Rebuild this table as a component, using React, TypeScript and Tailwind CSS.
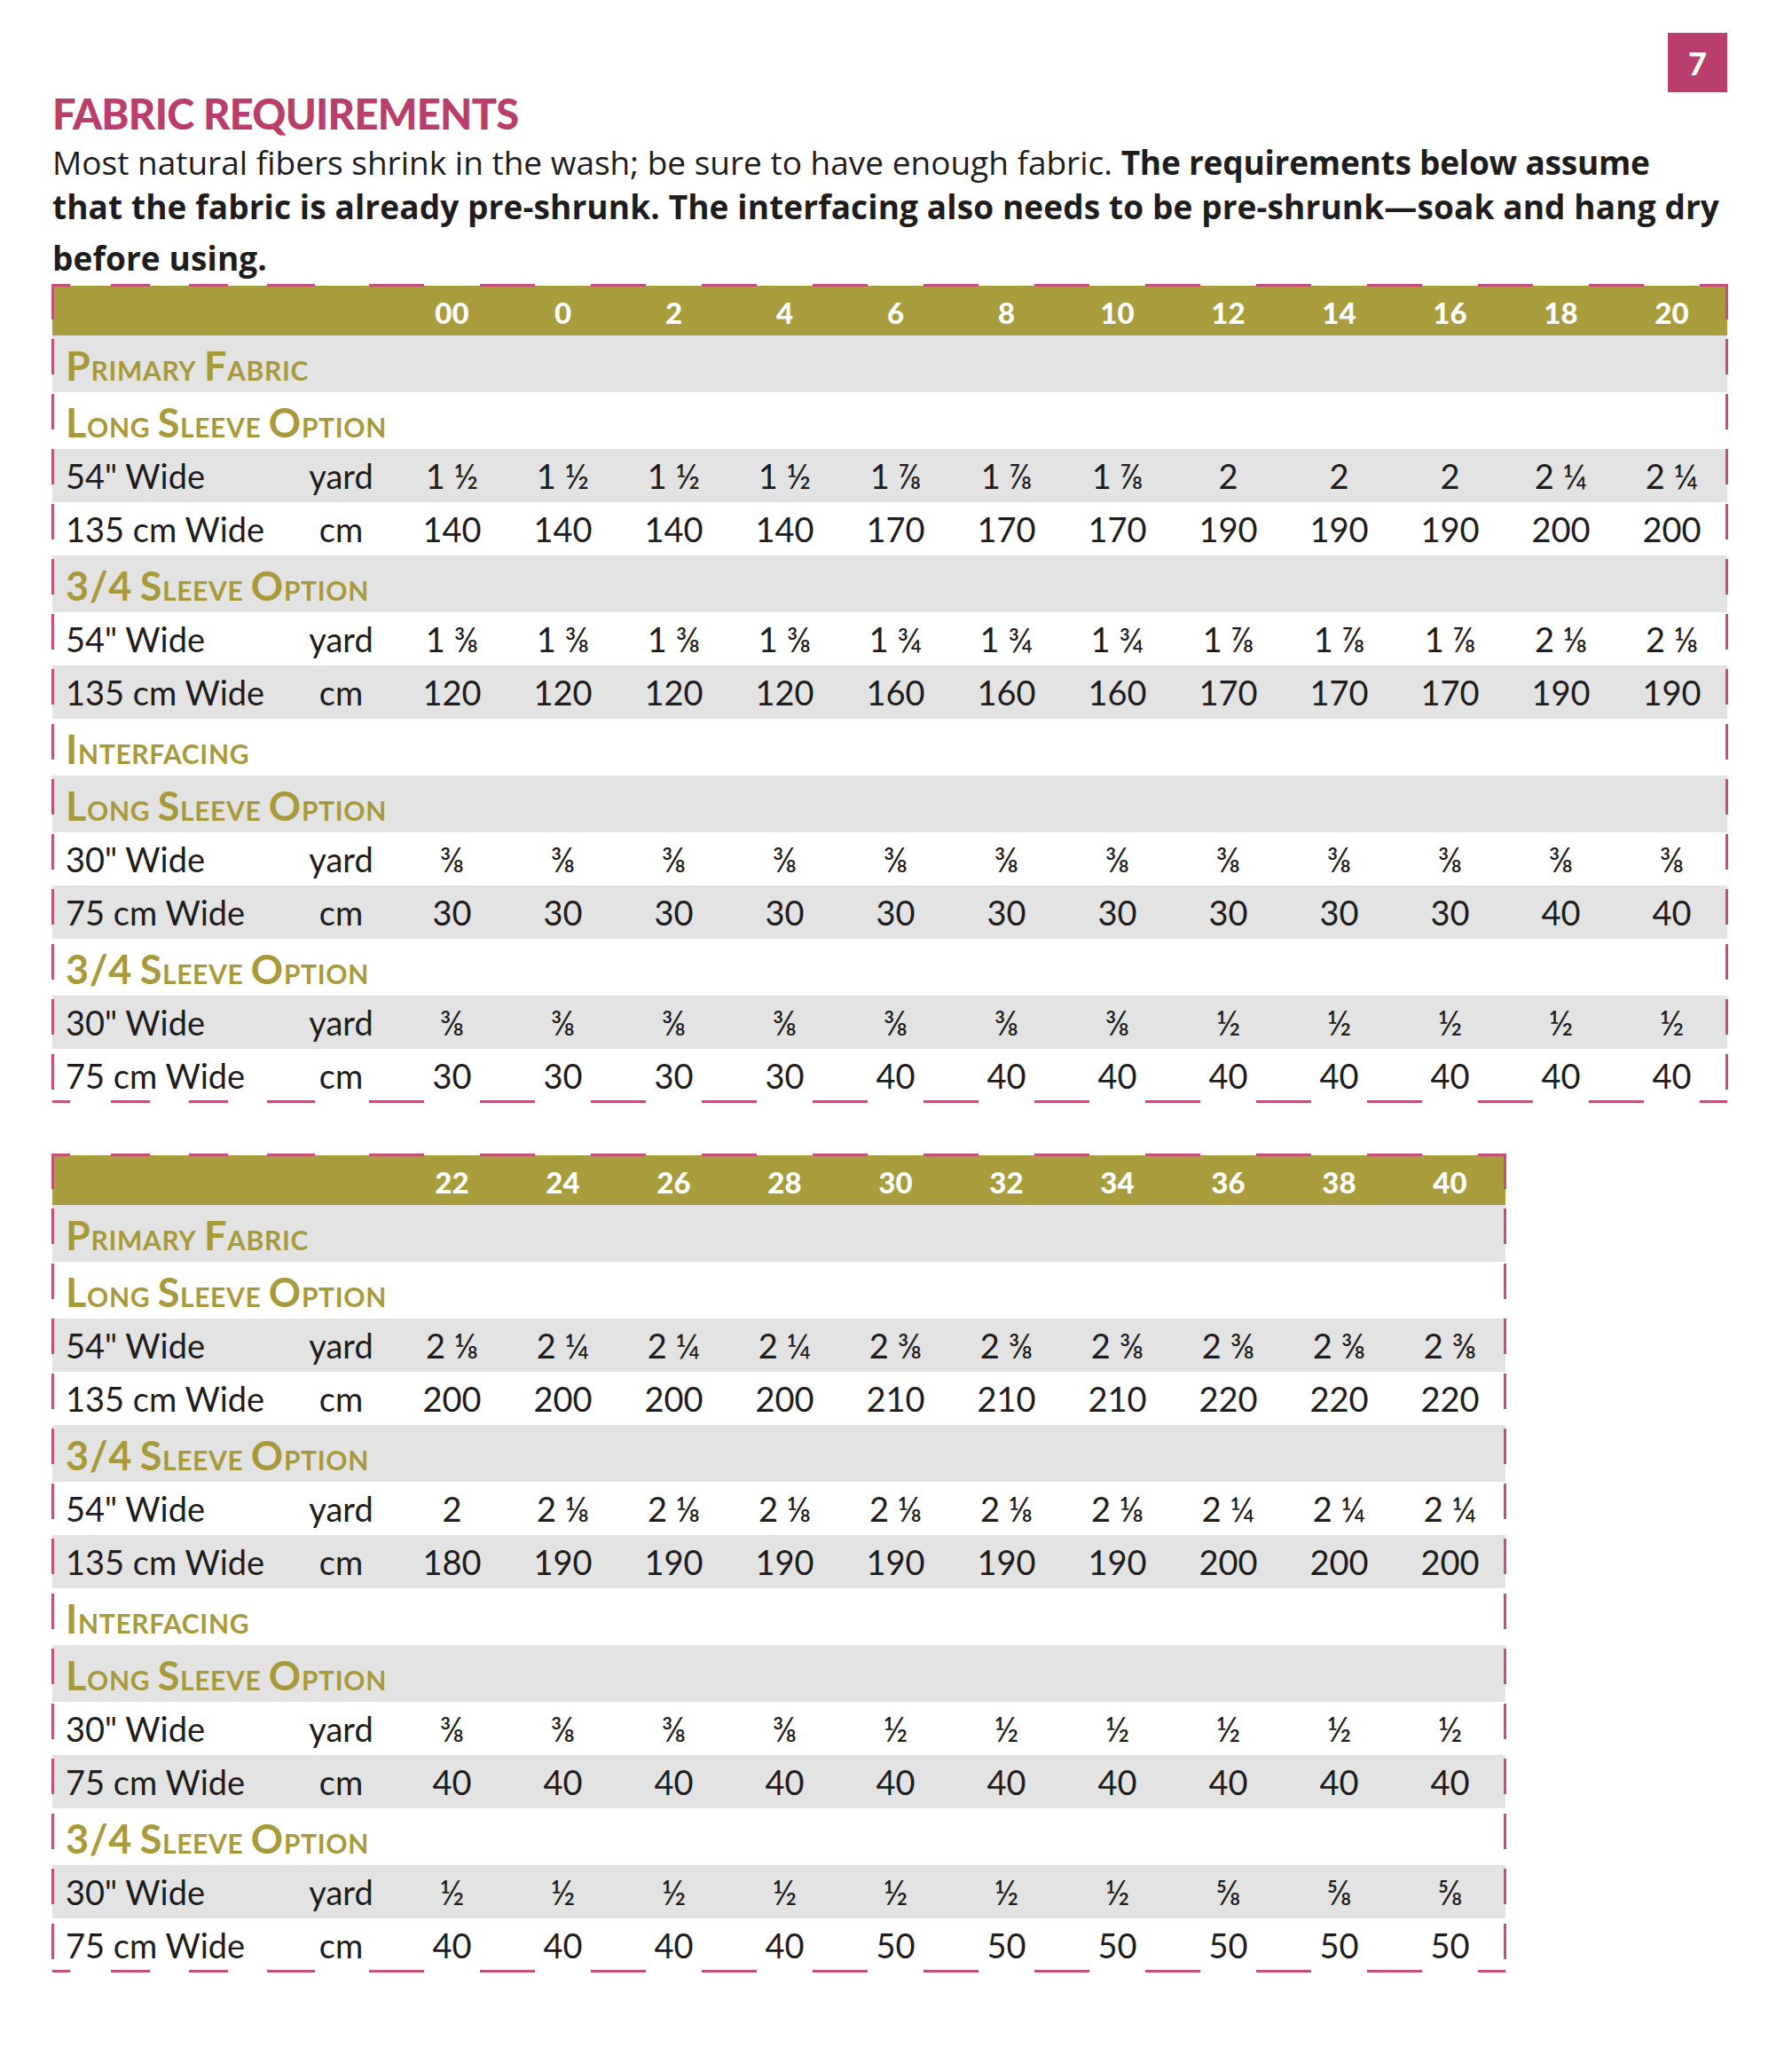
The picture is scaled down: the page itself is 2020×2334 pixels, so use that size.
import React from 'react';

type Row =
  | { kind: 'label'; text: string }
  | { kind: 'data'; label: string; unit: string; values: string[] };

const rep = (v: string, n: number): string[] => Array(n).fill(v);

const tableOne: { sizes: string[]; rows: Row[] } = {
  sizes: ['00', '0', '2', '4', '6', '8', '10', '12', '14', '16', '18', '20'],
  rows: [
    { kind: 'label', text: 'Primary Fabric' },
    { kind: 'label', text: 'Long Sleeve Option' },
    { kind: 'data', label: '54" Wide', unit: 'yard', values: [...rep('1 ½', 4), ...rep('1 ⅞', 3), ...rep('2', 3), ...rep('2 ¼', 2)] },
    { kind: 'data', label: '135 cm Wide', unit: 'cm', values: [...rep('140', 4), ...rep('170', 3), ...rep('190', 3), ...rep('200', 2)] },
    { kind: 'label', text: '3/4 Sleeve Option' },
    { kind: 'data', label: '54" Wide', unit: 'yard', values: [...rep('1 ⅜', 4), ...rep('1 ¾', 3), ...rep('1 ⅞', 3), ...rep('2 ⅛', 2)] },
    { kind: 'data', label: '135 cm Wide', unit: 'cm', values: [...rep('120', 4), ...rep('160', 3), ...rep('170', 3), ...rep('190', 2)] },
    { kind: 'label', text: 'Interfacing' },
    { kind: 'label', text: 'Long Sleeve Option' },
    { kind: 'data', label: '30" Wide', unit: 'yard', values: rep('⅜', 12) },
    { kind: 'data', label: '75 cm Wide', unit: 'cm', values: [...rep('30', 10), ...rep('40', 2)] },
    { kind: 'label', text: '3/4 Sleeve Option' },
    { kind: 'data', label: '30" Wide', unit: 'yard', values: [...rep('⅜', 7), ...rep('½', 5)] },
    { kind: 'data', label: '75 cm Wide', unit: 'cm', values: [...rep('30', 4), ...rep('40', 8)] },
  ],
};

const tableTwo: { sizes: string[]; rows: Row[] } = {
  sizes: ['22', '24', '26', '28', '30', '32', '34', '36', '38', '40'],
  rows: [
    { kind: 'label', text: 'Primary Fabric' },
    { kind: 'label', text: 'Long Sleeve Option' },
    { kind: 'data', label: '54" Wide', unit: 'yard', values: ['2 ⅛', ...rep('2 ¼', 3), ...rep('2 ⅜', 6)] },
    { kind: 'data', label: '135 cm Wide', unit: 'cm', values: [...rep('200', 4), ...rep('210', 3), ...rep('220', 3)] },
    { kind: 'label', text: '3/4 Sleeve Option' },
    { kind: 'data', label: '54" Wide', unit: 'yard', values: ['2', ...rep('2 ⅛', 6), ...rep('2 ¼', 3)] },
    { kind: 'data', label: '135 cm Wide', unit: 'cm', values: ['180', ...rep('190', 6), ...rep('200', 3)] },
    { kind: 'label', text: 'Interfacing' },
    { kind: 'label', text: 'Long Sleeve Option' },
    { kind: 'data', label: '30" Wide', unit: 'yard', values: [...rep('⅜', 4), ...rep('½', 6)] },
    { kind: 'data', label: '75 cm Wide', unit: 'cm', values: rep('40', 10) },
    { kind: 'label', text: '3/4 Sleeve Option' },
    { kind: 'data', label: '30" Wide', unit: 'yard', values: [...rep('½', 7), ...rep('⅝', 3)] },
    { kind: 'data', label: '75 cm Wide', unit: 'cm', values: [...rep('40', 4), ...rep('50', 6)] },
  ],
};

// dash pieces along the label area of the top / bottom edge
const labelDashes: [number, number][] = [
  [0, 20],
  [66, 110],
  [154, 198],
  [242, 296],
];

const SmallCaps: React.FC<{ text: string }> = ({ text }) => (
  <span className="tracking-[0.04em] [word-spacing:4px]">
    {text.split(' ').map((word, i) => (
      <React.Fragment key={i}>
        {i > 0 && ' '}
        {/^\d/.test(word) ? (
          <span className="text-[45px]">{word}</span>
        ) : (
          <>
            <span className="text-[45px]">{word[0]}</span>
            <span className="text-[30px]">{word.slice(1).toUpperCase()}</span>
          </>
        )}
      </React.Fragment>
    ))}
  </span>
);

const HorizontalDashes: React.FC<{ className: string }> = ({ className }) => (
  <div className={`absolute left-0 right-0 h-[3px] ${className}`}>
    {labelDashes.map(([a, b]) => (
      <div key={a} className="absolute top-0 h-full bg-[#c4507a]" style={{ left: a, width: b - a }} />
    ))}
    <div className="absolute top-0 bottom-0 left-[357px] right-0 bg-[repeating-linear-gradient(to_right,#c4507a_0_62px,transparent_62px_125px)]" />
  </div>
);

const Frame: React.FC = () => (
  <div className="pointer-events-none absolute inset-0">
    <HorizontalDashes className="top-[-2px]" />
    <HorizontalDashes className="bottom-[-1px]" />
    <div className="absolute top-[-2px] bottom-[-1px] left-[-1px] w-[3px] bg-[repeating-linear-gradient(to_bottom,#c4507a_0_40px,transparent_40px_62px)]" />
    <div className="absolute top-[-2px] bottom-[-1px] right-[-1px] w-[3px] bg-[repeating-linear-gradient(to_bottom,#c4507a_0_40px,transparent_40px_62px)]" />
  </div>
);

const SizeTable: React.FC<{ sizes: string[]; rows: Row[]; className: string }> = ({ sizes, rows, className }) => (
  <div className={`relative ${className}`}>
    {/* size header */}
    <div className="flex h-[56px] items-center bg-[#a99c3d] pt-[4px] text-[33px] font-black leading-none text-white">
      <div className="w-[388px]" />
      {sizes.map((s) => (
        <div key={s} className="w-[125px] text-center">
          {s}
        </div>
      ))}
    </div>

    {rows.map((row, i) => {
      const bg = i % 2 === 0 ? 'bg-[#e3e3e3]' : 'bg-white';
      if (row.kind === 'label') {
        return (
          <div key={i} className={`flex h-[64px] items-center pl-[15px] pt-[4px] font-bold leading-none text-[#a89a3b] ${bg}`}>
            <SmallCaps text={row.text} />
          </div>
        );
      }
      return (
        <div key={i} className={`flex h-[60px] items-center text-[38px] leading-none text-[#1f1c1d] ${bg}`}>
          <div className="w-[263px] pl-[15px]">{row.label}</div>
          <div className="w-[125px] text-center">{row.unit}</div>
          {row.values.map((v, j) => (
            <div key={j} className="w-[125px] text-center">
              {v}
            </div>
          ))}
        </div>
      );
    })}

    <Frame />
  </div>
);

export default function App() {
  return (
    <div className="relative min-h-[2334px] w-[2020px] bg-white font-['Lato','Noto_Sans',sans-serif] text-[#1f1c1d]">
      <div className="pl-[59px] pr-[73px] pt-[37px]">
        <div className="flex justify-end">
          <div className="flex h-[67px] w-[67px] items-center justify-center bg-[#b93e6b] text-[36px] font-black leading-none text-white">
            7
          </div>
        </div>

        <h1 className="mt-[1px] text-[47px] font-black leading-none tracking-[-0.015em] text-[#b93e6b]">
          FABRIC REQUIREMENTS
        </h1>

        <div className="mt-[6px] whitespace-nowrap font-['Open_Sans','Noto_Sans',sans-serif] text-[37px]">
          <div className="leading-[50px]">
            Most natural fibers shrink in the wash; be sure to have enough fabric.{' '}
            <span className="font-bold tracking-[-0.006em]">The requirements below assume</span>
          </div>
          <div className="font-bold leading-[50px] tracking-[0.003em]">
            that the fabric is already pre-shrunk. The interfacing also needs to be pre-shrunk—soak and hang dry
          </div>
          <div className="mt-[8px] font-bold leading-[50px] tracking-[0.003em]">before using.</div>
        </div>
      </div>

      <SizeTable sizes={tableOne.sizes} rows={tableOne.rows} className="ml-[59px] mt-[6px] w-[1888px]" />
      <SizeTable sizes={tableTwo.sizes} rows={tableTwo.rows} className="ml-[59px] mt-[60px] w-[1638px]" />
    </div>
  );
}
